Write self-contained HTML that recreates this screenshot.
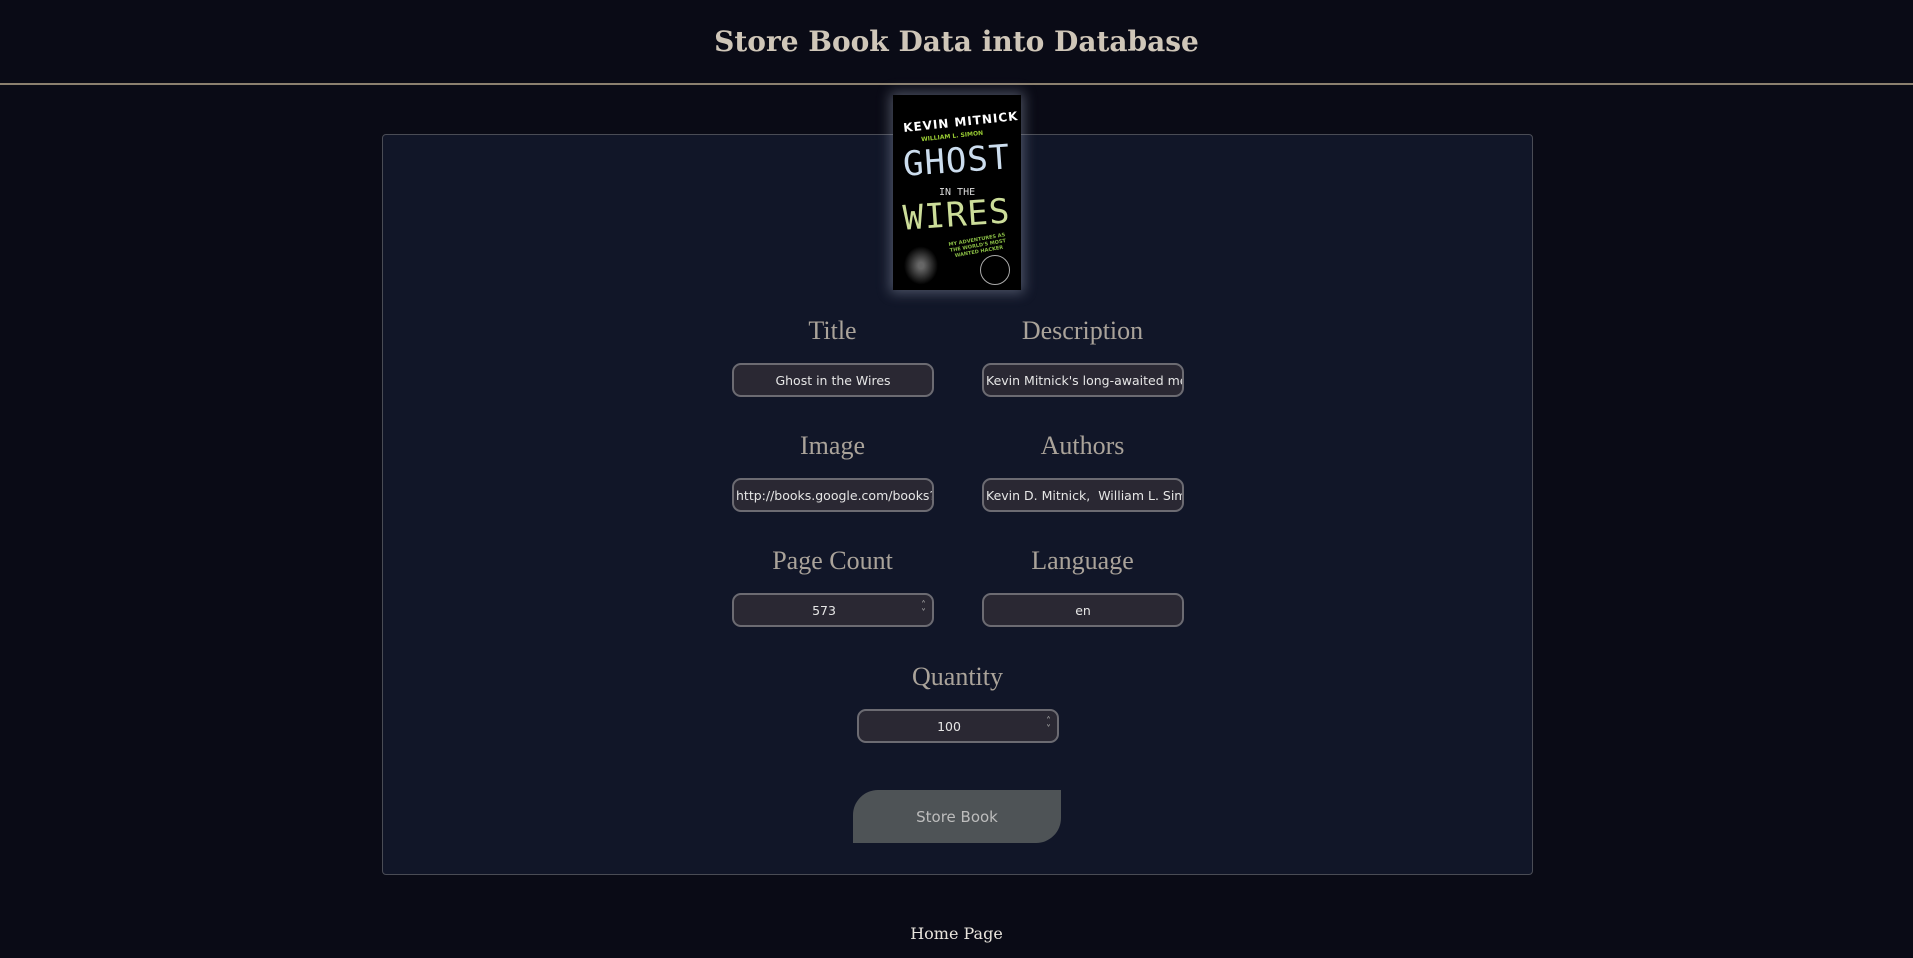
<!DOCTYPE html>
<html><head><meta charset="utf-8"><style>
*{box-sizing:border-box;margin:0;padding:0}
body{width:1913px;height:958px;background:#0a0b16;position:relative;overflow:hidden;font-family:"DejaVu Serif","Liberation Serif",serif}
h1{position:absolute;top:25px;left:0;width:100%;text-align:center;font-size:28px;font-weight:bold;color:#cfc6b8}
.hr{position:absolute;top:83px;left:0;width:100%;height:2px;background:#8b806f}
.panel{position:absolute;left:382px;top:134px;width:1151px;height:741px;background:#111628;border:1px solid #4a4c55;border-radius:4px}
.lbl{position:absolute;width:201px;text-align:center;font-size:26px;font-family:"Liberation Serif",serif;color:#aaa39a}
.in{position:absolute;width:202px;height:34px;background:#2a2833;border:2px solid #6c6b72;border-radius:9px;color:#e6e6e6;font:12.5px "DejaVu Sans","Liberation Sans",sans-serif;line-height:32px;text-align:center;white-space:nowrap;overflow:hidden}
.l{text-align:left;padding-left:2px}
.sp{position:absolute;right:6px;top:7px;font-size:10px;line-height:8px;color:#aaa}
.book{position:absolute;left:893px;top:95px;width:128px;height:195px;background:#000;box-shadow:0 0 12px 3px rgba(150,160,180,.45);overflow:hidden;font-family:"DejaVu Sans Mono",monospace}
.btn{position:absolute;left:853px;top:790px;width:208px;height:53px;background:#4e5356;border-radius:25px 0 25px 0;color:#bdbdbd;font:15px "DejaVu Sans","Liberation Sans",sans-serif;text-align:center;line-height:55px}
.home{position:absolute;top:924px;left:0;width:100%;text-align:center;font-size:16px;color:#e8e4dc}
</style></head><body>
<h1>Store Book Data into Database</h1>
<div class="hr"></div>
<div class="panel"></div>
<div class="book">
<div style="position:absolute;left:10px;top:20px;color:#fff;font:bold 12px 'DejaVu Sans',sans-serif;transform:rotate(-6deg);letter-spacing:1px">KEVIN MITNICK</div>
<div style="position:absolute;left:28px;top:38px;color:#9c3;font:bold 6px 'DejaVu Sans',sans-serif;transform:rotate(-6deg)">WILLIAM L. SIMON</div>
<div style="position:absolute;left:10px;top:46px;color:#cde;font-size:34px;letter-spacing:1px;transform:rotate(-4deg)">GHOST</div>
<div style="position:absolute;left:46px;top:92px;color:#ddd;font-size:10px">IN THE</div>
<div style="position:absolute;left:10px;top:100px;color:#cd9;font-size:34px;letter-spacing:1px;transform:rotate(-4deg)">WIRES</div>
<div style="position:absolute;left:50px;top:142px;color:#8b4;font:bold 5px 'DejaVu Sans',sans-serif;transform:rotate(-10deg);width:70px;text-align:center">MY ADVENTURES AS THE WORLD'S MOST WANTED HACKER</div>
<div style="position:absolute;left:87px;top:160px;width:30px;height:30px;border:1px solid #aaa;border-radius:50%"></div>
<div style="position:absolute;left:8px;top:148px;width:40px;height:45px;background:radial-gradient(#666 10%,transparent 60%)"></div>
</div>
<div class="lbl" style="left:732px;top:316px">Title</div>
<div class="lbl" style="left:982px;top:316px">Description</div>
<div class="in" style="left:732px;top:363px">Ghost in the Wires</div>
<div class="in l" style="left:982px;top:363px">Kevin Mitnick's long-awaited memoir</div>
<div class="lbl" style="left:732px;top:431px">Image</div>
<div class="lbl" style="left:982px;top:431px">Authors</div>
<div class="in l" style="left:732px;top:478px">http://books.google.com/books?id=</div>
<div class="in l" style="left:982px;top:478px">Kevin D. Mitnick,&nbsp; William L. Simon</div>
<div class="lbl" style="left:732px;top:546px">Page Count</div>
<div class="lbl" style="left:982px;top:546px">Language</div>
<div class="in" style="left:732px;top:593px;padding-right:18px">573<div class="sp">˄<br>˅</div></div>
<div class="in" style="left:982px;top:593px">en</div>
<div class="lbl" style="left:857px;top:662px">Quantity</div>
<div class="in" style="left:857px;top:709px;padding-right:18px">100<div class="sp">˄<br>˅</div></div>
<div class="btn">Store Book</div>
<div class="home">Home Page</div>
</body></html>
